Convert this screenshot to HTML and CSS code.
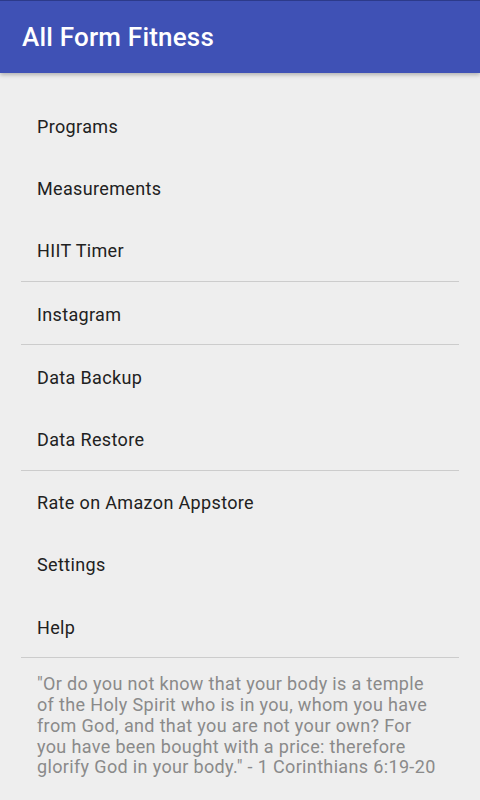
FILE: index.html
```html
<!DOCTYPE html>
<html>
<head>
<meta charset="utf-8">
<link rel="stylesheet" href="styles.css">
</head>
<body>
<header class="appbar"><h1 class="title">All Form Fitness</h1></header>
<main class="content">
  <ul class="menu">
    <li class="item">Programs</li>
    <li class="item">Measurements</li>
    <li class="item">HIIT Timer</li>
    <li class="divider"></li>
    <li class="item">Instagram</li>
    <li class="divider"></li>
    <li class="item">Data Backup</li>
    <li class="item">Data Restore</li>
    <li class="divider"></li>
    <li class="item">Rate on Amazon Appstore</li>
    <li class="item">Settings</li>
    <li class="item">Help</li>
    <li class="divider"></li>
  </ul>
  <p class="quote">"Or do you not know that your body is a temple of the Holy Spirit who is in you, whom you have from God, and that you are not your own? For you have been bought with a price: therefore glorify God in your body." - 1 Corinthians 6:19-20</p>
</main>
</body>
</html>
```
FILE: styles.css
```css
html, body {
  margin: 0;
  padding: 0;
  background: #eeeeee;
  font-family: Roboto, "Noto Sans", sans-serif;
  height: 800px;
  overflow: hidden;
}
.appbar {
  height: 73px;
  background: #3f51b5;
  border-top: 1px solid #2c3a8a;
  box-sizing: border-box;
  box-shadow: 0 2px 4px rgba(0,0,0,0.25);
  display: flex;
  align-items: center;
  padding-left: 22px;
  position: relative;
}
.title {
  margin: 0;
  color: #ffffff;
  font-size: 26px;
  font-weight: 500;
  letter-spacing: 0.2px;
}
.content {
  padding: 21.5px 21px 0 21px;
}
.menu {
  list-style: none;
  margin: 0;
  padding: 0;
}
.item {
  box-sizing: border-box;
  height: 62.2px;
  padding-top: 2px;
  display: flex;
  align-items: center;
  padding-left: 16px;
  font-size: 18px;
  letter-spacing: 0.35px;
  color: #212121;
}
.divider {
  height: 1px;
  background: #cccccc;
}
.quote {
  margin: 16px 0 0 0;
  padding: 0 16px;
  font-size: 18px;
  letter-spacing: 0.35px;
  line-height: 20.8px;
  color: #8a8a8a;
}
```
